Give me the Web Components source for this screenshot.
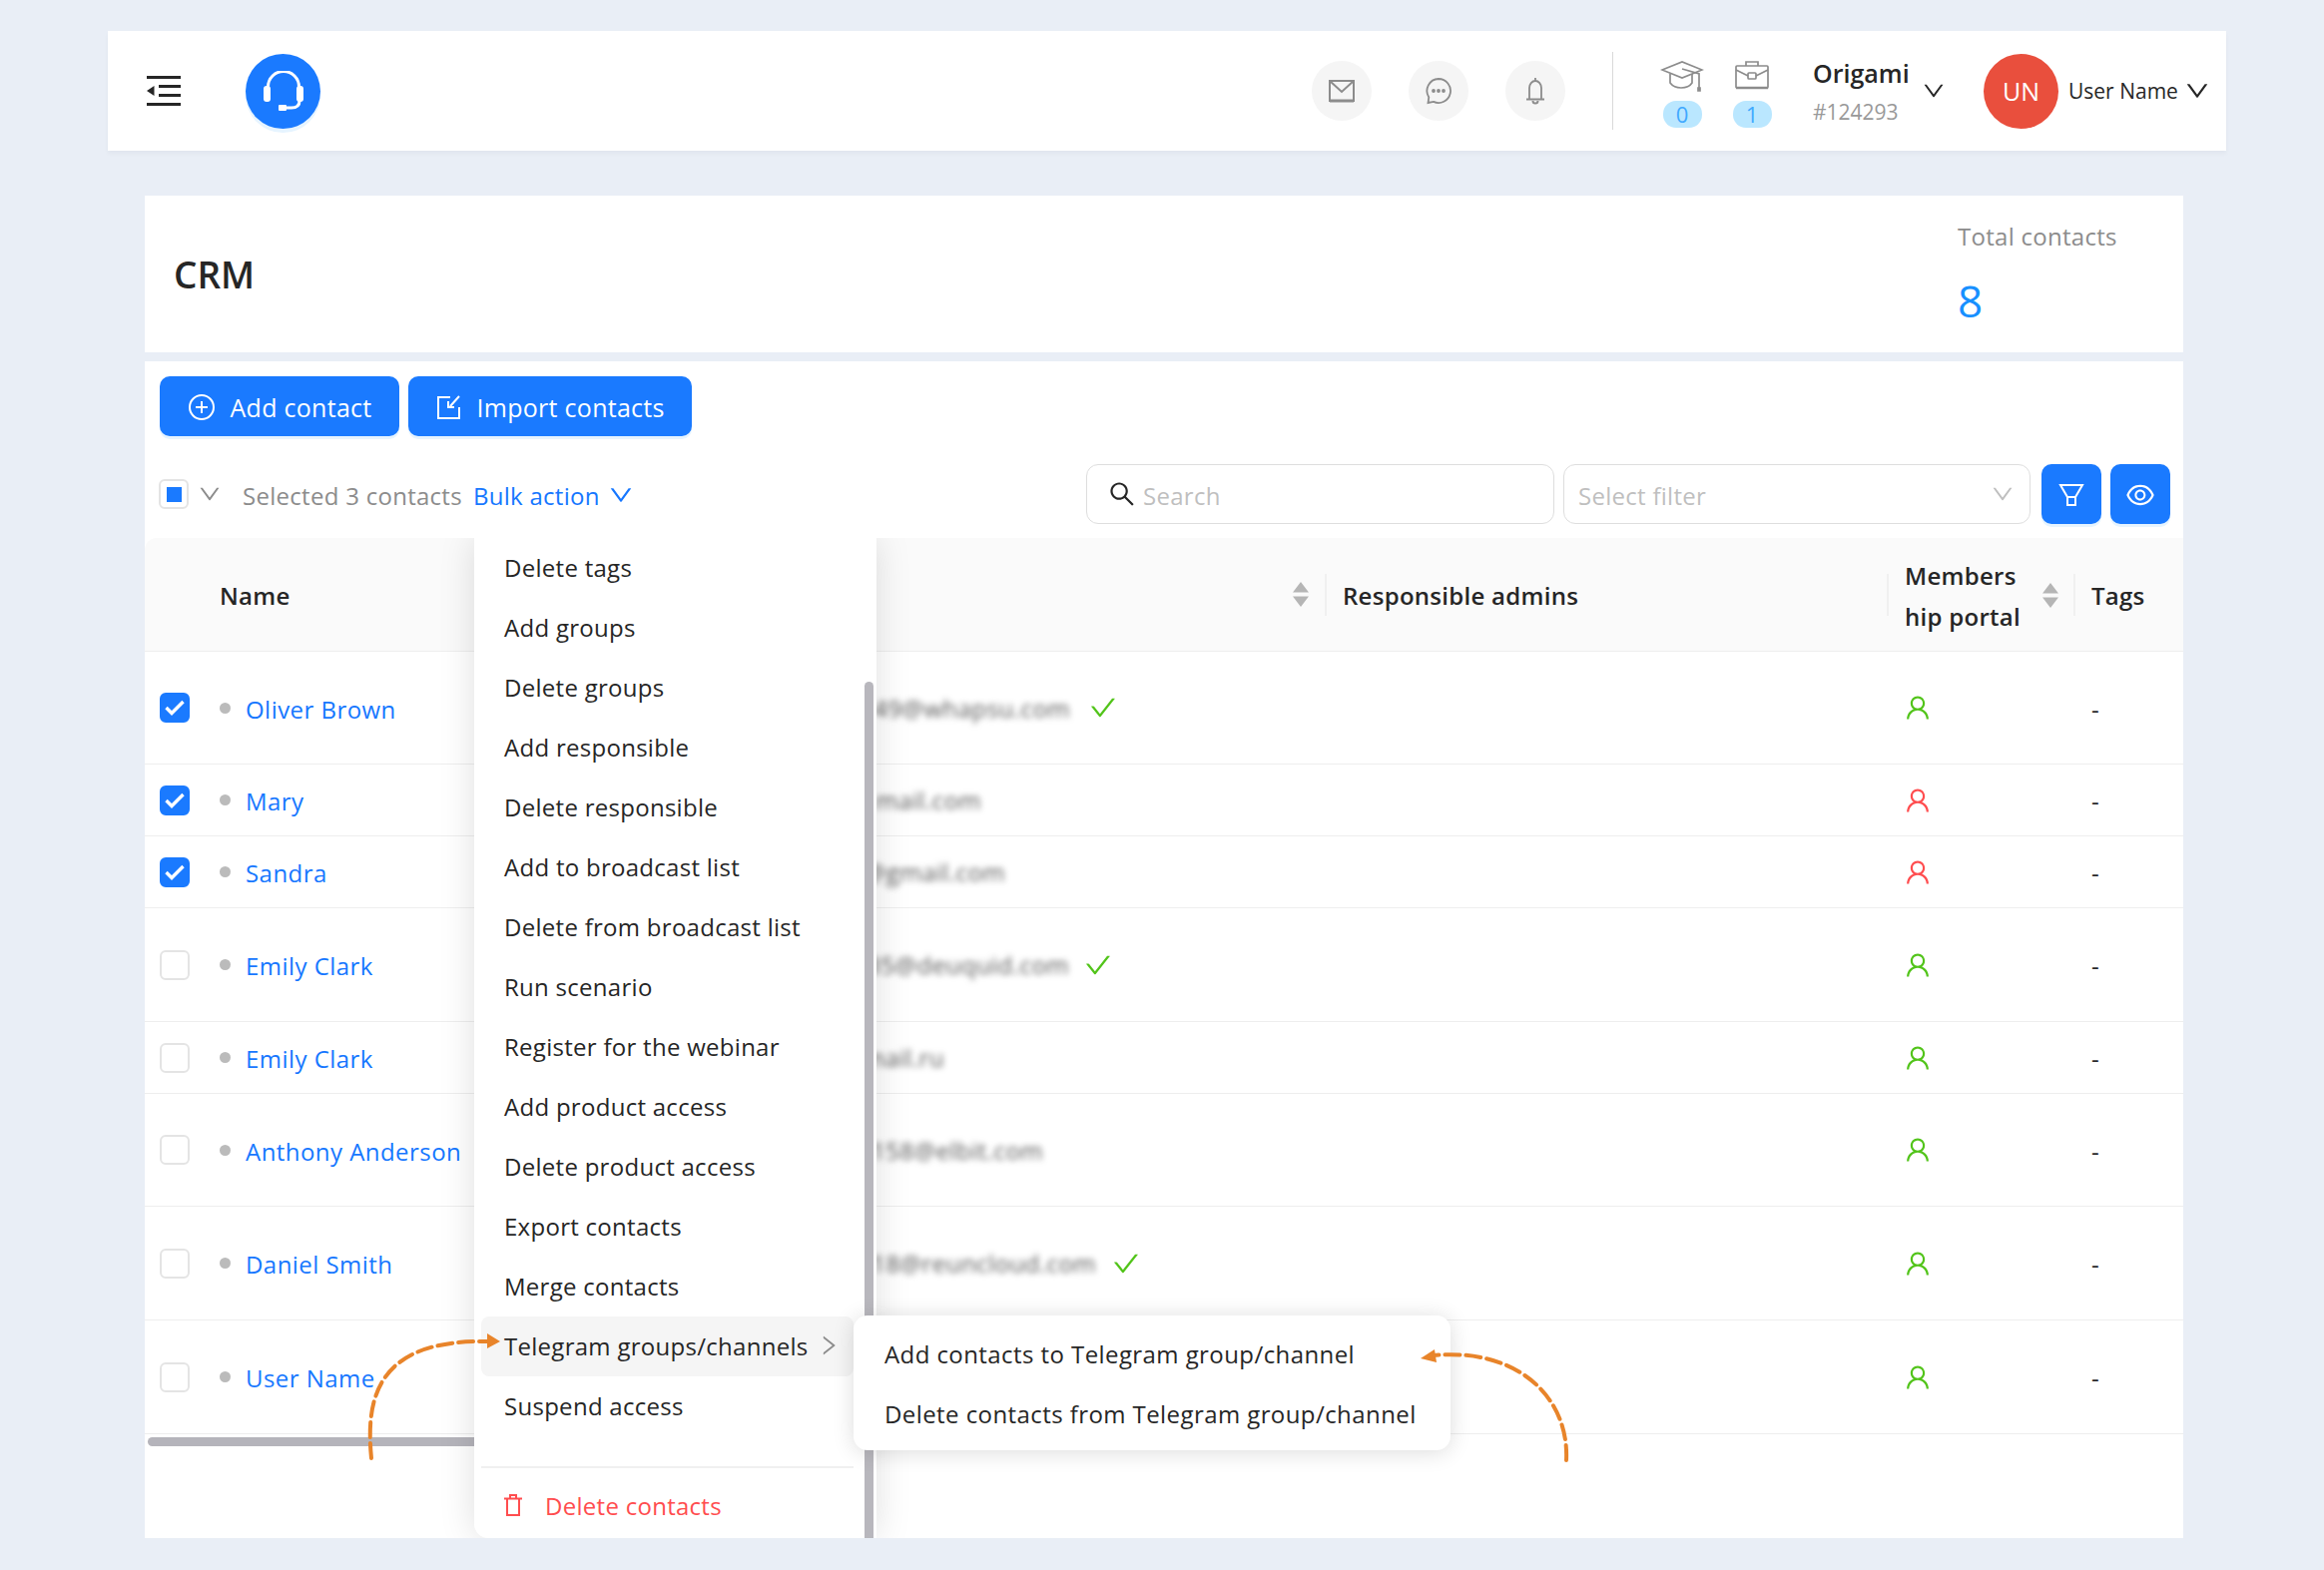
<!DOCTYPE html>
<html lang="en">
<head>
<meta charset="utf-8">
<title>CRM</title>
<style>
  body {
    margin: 0;
    min-height: 1573px;
    background: #e9eef6;
    color: #262626;
    font-family: "Open Sans", "Noto Sans", sans-serif;
    font-size: 24px;
    letter-spacing: .28px;
  }
</style>
</head>
<body>
<crm-app></crm-app>
<script>
(() => {
  const icons = {
    down: '<path fill="currentColor" d="M884 256h-75c-5.1 0-9.9 2.5-12.9 6.6L512 654.2 227.9 262.6c-3-4.1-7.8-6.6-12.9-6.6h-75c-6.5 0-10.3 7.4-6.5 12.7l352.6 486.1c12.8 17.6 39 17.6 51.7 0l352.6-486.1c3.9-5.3.1-12.7-6.4-12.7z"/>',
    right: '<path fill="currentColor" d="M765.7 486.8L314.9 134.7A7.97 7.97 0 00302 141v77.3c0 4.9 2.3 9.6 6.1 12.6l360 281.1-360 281.1c-3.9 3-6.1 7.7-6.1 12.6V883c0 6.7 7.7 10.4 12.9 6.3l450.8-352.1a31.96 31.96 0 000-50.4z"/>',
    check: '<path fill="currentColor" d="M912 190h-69.9c-9.8 0-19.1 4.5-25.1 12.2L404.7 724.5 207 474a32 32 0 00-25.1-12.2H112c-6.7 0-10.4 7.7-6.3 12.9l273.9 347c12.8 16.2 37.4 16.2 50.3 0l488.4-618.9c4.1-5.1.4-12.8-6.3-12.8z"/>',
    search: '<path fill="currentColor" d="M909.6 854.5L649.9 594.8C690.2 542.7 712 479 712 412c0-80.2-31.3-155.4-87.9-212.1-56.6-56.7-132-87.9-212.1-87.9s-155.5 31.3-212.1 87.9C143.2 256.5 112 331.8 112 412c0 80.1 31.3 155.5 87.9 212.1C256.5 680.8 331.8 712 412 712c67 0 130.6-21.8 182.7-62l259.7 259.6a8.2 8.2 0 0011.6 0l43.6-43.5a8.2 8.2 0 000-11.6zM570.4 570.4C528 612.7 471.8 636 412 636s-116-23.3-158.4-65.6C211.3 528 188 471.8 188 412s23.3-116.1 65.6-158.4C296 211.3 352.2 188 412 188s116.1 23.2 158.4 65.6S636 352.2 636 412s-23.3 116.1-65.6 158.4z"/>',
    eye: '<path fill="currentColor" d="M942.2 486.2C847.4 286.5 704.1 186 512 186c-192.2 0-335.4 100.5-430.2 300.3a60.3 60.3 0 000 51.5C176.6 737.5 319.9 838 512 838c192.2 0 335.4-100.5 430.2-300.3 7.7-16.2 7.7-35 0-51.5zM512 766c-161.3 0-279.4-81.8-362.7-254C232.6 339.8 350.7 258 512 258c161.3 0 279.4 81.8 362.7 254C791.5 684.2 673.4 766 512 766zm-4-430c-97.2 0-176 78.8-176 176s78.8 176 176 176 176-78.8 176-176-78.8-176-176-176zm0 288c-61.9 0-112-50.1-112-112s50.1-112 112-112 112 50.1 112 112-50.1 112-112 112z"/>',
    user: '<path fill="currentColor" d="M858.5 763.6a374 374 0 00-80.6-119.5 375.63 375.63 0 00-119.5-80.6c-.4-.2-.8-.3-1.2-.5C719.5 518 760 444.7 760 362c0-137-111-248-248-248S264 225 264 362c0 82.7 40.5 156 102.8 201.1-.4.2-.8.3-1.2.5-44.8 18.9-85 46-119.5 80.6a375.63 375.63 0 00-80.6 119.5A371.7 371.7 0 00136 901.8a8 8 0 008 8.2h60c4.4 0 7.9-3.5 8-7.8 2-77.2 33-149.5 87.8-204.3 56.7-56.7 132-87.9 212.2-87.9s155.5 31.2 212.2 87.9C779 752.7 810 825 812 902.2c.1 4.4 3.6 7.8 8 7.8h60a8 8 0 008-8.2c-1-47.8-10.9-94.3-29.5-138.2zM512 534c-45.9 0-89.1-17.9-121.6-50.4S340 407.9 340 362c0-45.9 17.9-89.1 50.4-121.6S466.1 190 512 190s89.1 17.9 121.6 50.4S684 316.1 684 362c0 45.9-17.9 89.1-50.4 121.6S557.9 534 512 534z"/>'
  }

  // only the part of each address that shows past the menu
  const rows = [
    { name: 'Oliver Brown', email: '1749@whapsu.com', end: 392, gap: 20, height: 113, checked: true, verified: true, portal: 'on' },
    { name: 'Mary', email: 'mail.com', end: 303, height: 72, checked: true, portal: 'off' },
    { name: 'Sandra', email: '@gmail.com', end: 327, height: 72, checked: true, portal: 'off' },
    { name: 'Emily Clark', email: '735@deuquid.com', end: 391, gap: 16, height: 114, verified: true, portal: 'on' },
    { name: 'Emily Clark', email: 'mail.ru', end: 266, height: 72, portal: 'on' },
    { name: 'Anthony Anderson', email: '158@elbit.com', end: 365, height: 113, portal: 'on' },
    { name: 'Daniel Smith', email: '18@reuncloud.com', end: 418, gap: 17, height: 114, verified: true, portal: 'on' },
    { name: 'User Name', email: '', end: 300, height: 114, portal: 'on' }
  ]

  const menu = [
    'Delete tags', 'Add groups', 'Delete groups', 'Add responsible', 'Delete responsible',
    'Add to broadcast list', 'Delete from broadcast list', 'Run scenario', 'Register for the webinar',
    'Add product access', 'Delete product access', 'Export contacts', 'Merge contacts'
  ]

  const columns = '535px 649px 563px 187px 108px'

  class UiIcon extends HTMLElement {
    constructor() {
      super()
      const size = this.getAttribute('size') || 22
      this.attachShadow({ mode: 'open' }).innerHTML = `
      <style>
        :host { display: inline-flex; flex: none; }
        svg { display: block; }
      </style>
      <svg width="${size}" height="${size}" viewBox="64 64 896 896">${icons[this.getAttribute('name')]}</svg>
      `
    }
  }
  customElements.define('ui-icon', UiIcon)

  class RoundIcon extends HTMLElement {
    constructor() {
      super()
      this.attachShadow({ mode: 'open' }).innerHTML = `
      <style>
        :host {
          display: flex;
          align-items: center;
          justify-content: center;
          width: 60px;
          height: 60px;
          border-radius: 50%;
          background: #f5f5f5;
          color: #8c8c8c;
        }
      </style>
      <slot></slot>
      `
    }
  }
  customElements.define('round-icon', RoundIcon)

  class CountIcon extends HTMLElement {
    constructor() {
      super()
      this.attachShadow({ mode: 'open' }).innerHTML = `
      <style>
        :host {
          display: flex;
          flex-direction: column;
          align-items: center;
          width: 50px;
          height: 74px;
          color: #8c8c8c;
        }
        .art { height: 41px; padding-top: 6px; }
        .count {
          width: 39px;
          height: 27px;
          border-radius: 13px;
          background: #bae7ff;
          color: #40a9ff;
          font-size: 22px;
          letter-spacing: 0;
          line-height: 27px;
          text-align: center;
        }
      </style>
      <div class="art"><slot name="art"></slot></div>
      <div class="count"><slot></slot></div>
      `
    }
  }
  customElements.define('count-icon', CountIcon)

  class TopBar extends HTMLElement {
    constructor() {
      super()
      this.attachShadow({ mode: 'open' }).innerHTML = `
      <style>
        :host {
          display: flex;
          align-items: center;
          height: 120px;
          margin: 0 98px 0 108px;
          background: #fff;
          box-shadow: 0 3px 4px rgba(0, 21, 41, .04);
          letter-spacing: 0;
        }
        svg { display: block; }
        .fold { margin-left: 39px; }
        .logo {
          display: flex;
          align-items: center;
          justify-content: center;
          width: 75px;
          height: 75px;
          margin-left: 65px;
          border-radius: 50%;
          background: #1a7aff;
          box-shadow: 0 4px 0 #e6f4ff;
        }
        .rounds { display: flex; gap: 37px; margin-left: auto; }
        .divider { width: 1px; height: 78px; margin: 0 44px 0 47px; background: #d9d9d9; }
        .counts { display: flex; gap: 20px; }
        .org { width: 110px; margin-left: 36px; }
        .org b { display: block; font-size: 25px; font-weight: 600; line-height: 36px; }
        .org span { display: block; margin-top: 6px; color: #999; font-size: 21px; line-height: 30px; }
        .avatar {
          display: flex;
          align-items: center;
          justify-content: center;
          width: 75px;
          height: 75px;
          margin-left: 39px;
          border-radius: 50%;
          background: #e94f3d;
          color: #fff;
          font-size: 25px;
        }
        .user { width: 117px; margin-left: 10px; font-size: 21px; white-space: nowrap; }
        .end { margin-right: 17px; }
      </style>
      <svg class="fold" width="34" height="30" viewBox="0 0 34 30" fill="#262626">
        <rect width="34" height="3"/><rect x="12" y="9" width="22" height="3"/>
        <rect x="12" y="18" width="22" height="3"/><rect y="27" width="34" height="3"/>
        <path d="M7.5 10v10L0 15z"/>
      </svg>
      <div class="logo">
        <svg width="40" height="40" viewBox="0 0 40 40" fill="#fff">
          <path d="M4.5 20v-4a15.5 15.5 0 0 1 31 0v4" fill="none" stroke="#fff" stroke-width="3"/>
          <rect y="15" width="7" height="16" rx="3"/><rect x="33" y="15" width="7" height="16" rx="3"/>
          <path d="M36 30c0 5-3 7-8 7H17" fill="none" stroke="#fff" stroke-width="3"/>
          <rect x="15" y="34" width="8" height="6" rx="1"/>
        </svg>
      </div>
      <div class="rounds">
        <round-icon>
          <svg width="28" height="24" viewBox="0 0 28 24" fill="none" stroke="currentColor" stroke-width="2">
            <path d="M2 2h24v20H2z"/><path d="M2 2l12 11L26 2"/><path d="M2 22h24" stroke-width="3"/>
          </svg>
        </round-icon>
        <round-icon>
          <svg width="28" height="28" viewBox="0 0 28 28" fill="none" stroke="currentColor" stroke-width="1.8">
            <path d="M14 2a12 12 0 1 1-5 22.9L3.500 26l.8-5.600A12 12 0 0 1 14 2z"/>
            <circle cx="9" cy="14" r="1" fill="currentColor"/><circle cx="14" cy="14" r="1" fill="currentColor"/><circle cx="19" cy="14" r="1" fill="currentColor"/>
          </svg>
        </round-icon>
        <round-icon>
          <svg width="20" height="28" viewBox="0 0 20 28" fill="none" stroke="currentColor" stroke-width="1.8">
            <path d="M10 1v3M4 22V11a6 7 0 0 1 12 0v11M1 22.500h18"/><path d="M7.500 24a2.500 2.500 0 0 0 5 0" stroke-width="2"/>
          </svg>
        </round-icon>
      </div>
      <div class="divider"></div>
      <div class="counts">
        <count-icon>
          <svg slot="art" width="44" height="32" viewBox="0 0 44 32" fill="none" stroke="currentColor" stroke-width="1.7">
            <path d="M2 10L22 2l20 8-20 8z"/><path d="M10 14v9c3 4 6 5 11 5s9-2 11-5v-9"/><path d="M22 9l17 5v14"/>
            <path d="M38 28h2v3h-2z" fill="currentColor"/>
          </svg>
          0
        </count-icon>
        <count-icon>
          <svg slot="art" width="34" height="30" viewBox="0 0 34 30" fill="none" stroke="currentColor" stroke-width="1.700">
            <rect x="1" y="6" width="32" height="22" rx="1"/><path d="M11 6V2h12v4"/><path d="M1 10l12 6M33 10l-12 6"/>
            <rect x="13" y="13" width="8" height="6" rx="1"/><path d="M1 28h32" stroke-width="2.500"/>
          </svg>
          1
        </count-icon>
      </div>
      <div class="org"><b>Origami</b><span>#124293</span></div>
      <ui-icon name="down" size="22"></ui-icon>
      <div class="avatar">UN</div>
      <div class="user">User Name</div>
      <ui-icon class="end" name="down" size="24"></ui-icon>
      `
    }
  }
  customElements.define('top-bar', TopBar)

  class CrmHead extends HTMLElement {
    constructor() {
      super()
      this.attachShadow({ mode: 'open' }).innerHTML = `
      <style>
        :host {
          display: flex;
          height: 157px;
          margin: 45px 141px 0 145px;
          background: #fff;
        }
        h1 { margin: 0 0 0 29px; align-self: center; font-size: 37px; font-weight: 600; letter-spacing: 0; }
        .total { margin-left: auto; width: 226px; padding-top: 24px; box-sizing: border-box; }
        .label { color: #8c8c8c; line-height: 34px; }
        .count { margin-top: 17px; color: #1890ff; font-size: 44px; line-height: 60px; }
      </style>
      <h1>CRM</h1>
      <div class="total">
        <div class="label">Total contacts</div>
        <div class="count">8</div>
      </div>
      `
    }
  }
  customElements.define('crm-head', CrmHead)

  class UiButton extends HTMLElement {
    constructor() {
      super()
      this.attachShadow({ mode: 'open' }).innerHTML = `
      <style>
        :host {
          display: inline-flex;
          align-items: center;
          justify-content: center;
          gap: 15px;
          height: 60px;
          min-width: 60px;
          box-sizing: border-box;
          padding: 2px var(--pad, 27.5px) 0;
          border-radius: 10px;
          background: #1a7aff;
          box-shadow: 0 3px 0 #e6f4ff;
          color: #fff;
          font-size: 25px;
          white-space: nowrap;
        }
      </style>
      <slot></slot>
      `
    }
  }
  customElements.define('ui-button', UiButton)

  class UiCheck extends HTMLElement {
    constructor() {
      super()
      const on = this.hasAttribute('checked')
      this.attachShadow({ mode: 'open' }).innerHTML = `
      <style>
        :host {
          display: flex;
          align-items: center;
          justify-content: center;
          flex: none;
          width: 30px;
          height: 30px;
          box-sizing: border-box;
          border: 2px solid ${on ? '#1a7aff' : '#e4e4e4'};
          border-radius: 6px;
          background: ${on ? '#1a7aff' : '#fff'};
        }
        i { width: 15px; height: 15px; background: #1a7aff; }
      </style>
      ${on ? `<svg width="20" height="16" viewBox="0 0 20 16" fill="none" stroke="#fff" stroke-width="3.400"><path d="M1.500 8l5.500 5.500L18.500 2"/></svg>` : ''}
      ${this.hasAttribute('partial') ? '<i></i>' : ''}
      `
    }
  }
  customElements.define('ui-check', UiCheck)

  class ContactToolbar extends HTMLElement {
    constructor() {
      super()
      this.attachShadow({ mode: 'open' }).innerHTML = `
      <style>
        :host { display: block; padding: 15px 13px 14px 14px; }
        .actions { display: flex; gap: 9px; margin-left: 1px; }
        .filters { display: flex; align-items: center; margin-top: 28px; }
        .down { margin-left: 10px; color: #8c8c8c; }
        .selected { margin: 2px 0 0 22px; color: #8c8c8c; white-space: nowrap; }
        .bulk { display: flex; align-items: center; gap: 9px; margin: 2px 0 0 11px; color: #1677ff; white-space: nowrap; }
        .box {
          display: flex;
          align-items: center;
          height: 60px;
          box-sizing: border-box;
          border: 1.500px solid #dedede;
          border-radius: 12px;
          background: #fff;
          color: #bfbfbf;
        }
        .box span { margin-top: 2px; }
        .search { width: 469px; margin-left: auto; padding-left: 22px; gap: 8px; }
        .search ui-icon { color: #262626; }
        .select { width: 468px; margin: 0 11px 0 9px; padding: 0 16px 0 14px; justify-content: space-between; }
        .square { --pad: 0px; margin-left: 0; }
        .square + .square { margin-left: 9px; }
      </style>
      <div class="actions">
        <ui-button>
          <svg width="28" height="28" viewBox="0 0 28 28" fill="none" stroke="#fff" stroke-width="2"><circle cx="14" cy="14" r="12"/><path d="M14 8v12M8 14h12"/></svg>
          Add contact
        </ui-button>
        <ui-button>
          <svg width="26" height="26" viewBox="0 0 26 26" fill="none" stroke="#fff" stroke-width="2"><path d="M14 3H2v21h21V13"/><path d="M23 2l-9 10M12 7v6h6"/></svg>
          Import contacts
        </ui-button>
      </div>
      <div class="filters">
        <ui-check partial></ui-check>
        <ui-icon class="down" name="down"></ui-icon>
        <span class="selected">Selected 3 contacts</span>
        <span class="bulk">Bulk action <ui-icon name="down" size="24"></ui-icon></span>
        <div class="box search"><ui-icon name="search" size="26"></ui-icon><span>Search</span></div>
        <div class="box select"><span>Select filter</span> <ui-icon name="down"></ui-icon></div>
        <ui-button class="square">
          <svg width="26" height="24" viewBox="0 0 26 24" fill="none" stroke="#fff" stroke-width="2"><path d="M2 2h22l-7 12H9z"/><path d="M9 14h8v8H9z"/></svg>
        </ui-button>
        <ui-button class="square"><ui-icon name="eye" size="28"></ui-icon></ui-button>
      </div>
      `
    }
  }
  customElements.define('contact-toolbar', ContactToolbar)

  class SortMark extends HTMLElement {
    constructor() {
      super()
      this.attachShadow({ mode: 'open' }).innerHTML = `
      <style>
        :host { display: block; flex: none; }
        svg { display: block; }
      </style>
      <svg width="16" height="25" viewBox="0 0 16 25" fill="#b5b5b5"><path d="M8 0l8 10.500H0zM8 25L0 14.500h16z"/></svg>
      `
    }
  }
  customElements.define('sort-mark', SortMark)

  class TableHead extends HTMLElement {
    constructor() {
      super()
      this.attachShadow({ mode: 'open' }).innerHTML = `
      <style>
        :host {
          display: grid;
          grid-template-columns: ${columns};
          height: 114px;
          box-sizing: border-box;
          border-bottom: 1px solid #eee;
          border-radius: 12px 0 0 0;
          background: #fafafa;
          font-weight: 600;
        }
        div { display: flex; align-items: center; position: relative; }
        .name { padding: 2px 0 0 75px; }
        .mail { justify-content: flex-end; padding-right: 18px; }
        .sep::after {
          content: '';
          position: absolute;
          right: 0;
          top: 36px;
          width: 2px;
          height: 42px;
          background: #f0f0f0;
        }
        .admins { padding: 2px 0 0 16px; }
        .portal { padding: 2px 0 0 16px; gap: 17px; line-height: 41px; }
        .portal span { width: 121px; }
        .tags { padding: 2px 0 0 16px; }
      </style>
      <div class="name">Name</div>
      <div class="mail sep"><sort-mark></sort-mark></div>
      <div class="admins sep">Responsible admins</div>
      <div class="portal sep"><span>Members<br>hip portal</span><sort-mark></sort-mark></div>
      <div class="tags">Tags</div>
      `
    }
  }
  customElements.define('table-head', TableHead)

  class ContactRow extends HTMLElement {
    constructor() {
      super()
      const on = this.hasAttribute('checked')
      const end = this.getAttribute('end')
      const email = this.getAttribute('email')
      const gap = this.getAttribute('gap') || 20
      const color = this.getAttribute('portal') === 'on' ? '#52c41a' : '#ff4d4f'
      this.attachShadow({ mode: 'open' }).innerHTML = `
      <style>
        :host {
          display: grid;
          grid-template-columns: ${columns};
          box-sizing: border-box;
          border-bottom: 1px solid #eee;
          background: #fff;
          letter-spacing: .45px;
        }
        div { display: flex; align-items: center; }
        .name { padding-left: 15px; color: #1677ff; white-space: nowrap; }
        .dot { width: 11px; height: 11px; margin: 0 15px 0 30px; border-radius: 50%; background: #bbb; }
        .label { margin-top: 2px; }
        .mail span {
          display: block;
          width: ${end}px;
          overflow: hidden;
          color: #555;
          filter: blur(3px);
          text-align: right;
          white-space: nowrap;
        }
        .mail ui-icon { margin-left: ${gap}px; color: #52c41a; }
        .portal { grid-column: 4; padding-left: 16px; color: ${color}; }
        .tags { padding: 2px 0 0 16px; }
      </style>
      <div class="name"><ui-check ${on ? 'checked' : ''}></ui-check><i class="dot"></i><span class="label"><slot></slot></span></div>
      <div class="mail">${email ? `<span>${email}</span>` : ''}${this.hasAttribute('verified') ? '<ui-icon name="check" size="26"></ui-icon>' : ''}</div>
      <div class="portal"><ui-icon name="user" size="26"></ui-icon></div>
      <div class="tags">-</div>
      `
    }
  }
  customElements.define('contact-row', ContactRow)

  class MenuItem extends HTMLElement {
    constructor() {
      super()
      this.attachShadow({ mode: 'open' }).innerHTML = `
      <style>
        :host {
          display: flex;
          align-items: center;
          height: 60px;
          box-sizing: border-box;
          padding: 0 14px 2px 23px;
          border-radius: 8px;
          white-space: nowrap;
        }
        :host([active]) { background: #f5f5f5; }
        :host([danger]) { color: #ff4d4f; }
      </style>
      <slot></slot>
      `
    }
  }
  customElements.define('menu-item', MenuItem)

  class BulkMenu extends HTMLElement {
    constructor() {
      super()
      this.attachShadow({ mode: 'open' }).innerHTML = `
      <style>
        :host {
          position: absolute;
          left: 330px;
          top: 0;
          width: 403px;
          height: 1002px;
          box-sizing: border-box;
          padding-left: 7px;
          padding-right: 23px;
          border-radius: 0 0 0 14px;
          background: #fff;
          box-shadow: 0 0 36px rgba(0, 0, 0, .13);
        }
        .split { height: 2px; margin: 30px 0 8px; background: #f0f0f0; }
        .far { justify-content: space-between; color: #8c8c8c; }
        .far span { color: #262626; }
        .trash { margin-right: 23px; }
        .bar {
          position: absolute;
          right: 3px;
          top: 144px;
          bottom: 0;
          width: 9px;
          border-radius: 5px 5px 0 0;
          background: #b8b7bd;
        }
      </style>
      <div class="bar"></div>
      ${menu.map(data => `<menu-item>${data}</menu-item>`).join('')}
      <menu-item class="far" active><span>Telegram groups/channels</span><ui-icon name="right" size="22"></ui-icon></menu-item>
      <menu-item>Suspend access</menu-item>
      <div class="split"></div>
      <menu-item danger>
        <svg class="trash" width="18" height="22" viewBox="0 0 18 22" fill="none" stroke="currentColor" stroke-width="2"><path d="M0 4.500h18M3 4.500V21h12V4.500M6 4V1h6v3"/></svg>
        Delete contacts
      </menu-item>
      `
    }
  }
  customElements.define('bulk-menu', BulkMenu)

  class SubMenu extends HTMLElement {
    constructor() {
      super()
      this.attachShadow({ mode: 'open' }).innerHTML = `
      <style>
        :host {
          position: absolute;
          left: 710px;
          top: 779px;
          width: 598px;
          height: 135px;
          box-sizing: border-box;
          padding: 9px 0 0 8px;
          border-radius: 14px;
          background: #fff;
          box-shadow: 0 2px 22px rgba(0, 0, 0, .14);
          letter-spacing: .42px;
        }
      </style>
      <menu-item>Add contacts to Telegram group/channel</menu-item>
      <menu-item>Delete contacts from Telegram group/channel</menu-item>
      `
    }
  }
  customElements.define('sub-menu', SubMenu)

  class CalloutArrows extends HTMLElement {
    constructor() {
      super()
      this.attachShadow({ mode: 'open' }).innerHTML = `
      <style>
        :host { position: absolute; inset: 0; pointer-events: none; }
        svg { display: block; }
      </style>
      <svg width="2042" height="1002" viewBox="145 539 2042 1002" fill="none">
        <g stroke="#e8842a" stroke-width="4" stroke-dasharray="15 6" stroke-linecap="round">
          <path d="M372 1461C366 1400 378 1342 488 1344"/>
          <path d="M1569 1463C1572 1400 1520 1350 1436 1358"/>
        </g>
        <path d="M501 1344l-13-8v15z" fill="#e8842a"/>
        <path d="M1423 1361l14-9 2 13z" fill="#e8842a"/>
      </svg>
      `
    }
  }
  customElements.define('callout-arrows', CalloutArrows)

  class ContactTable extends HTMLElement {
    constructor() {
      super()
      this.attachShadow({ mode: 'open' }).innerHTML = `
      <style>
        :host {
          display: block;
          position: relative;
          height: 1002px;
          overflow: hidden;
        }
        .scroll { width: 700px; height: 9px; margin: 3px 0 0 3px; border-radius: 5px; background: #b5b4bb; }
      </style>
      <table-head></table-head>
      ${rows.map(row => `<contact-row style="height:${row.height}px" email="${row.email}" end="${row.end}"${row.gap ? ` gap="${row.gap}"` : ''} portal="${row.portal}"${row.checked ? ' checked' : ''}${row.verified ? ' verified' : ''}>${row.name}</contact-row>`).join('')}
      <div class="scroll"></div>
      <bulk-menu></bulk-menu>
      <sub-menu></sub-menu>
      <callout-arrows></callout-arrows>
      `
    }
  }
  customElements.define('contact-table', ContactTable)

  class CrmApp extends HTMLElement {
    constructor() {
      super()
      this.attachShadow({ mode: 'open' }).innerHTML = `
      <style>
        :host { display: block; padding-top: 31px; }
        .card { height: 1179px; margin: 9px 141px 0 145px; background: #fff; overflow: hidden; }
      </style>
      <top-bar></top-bar>
      <crm-head></crm-head>
      <div class="card">
        <contact-toolbar></contact-toolbar>
        <contact-table></contact-table>
      </div>
      `
    }
  }
  customElements.define('crm-app', CrmApp)
})()
</script>
</body>
</html>
